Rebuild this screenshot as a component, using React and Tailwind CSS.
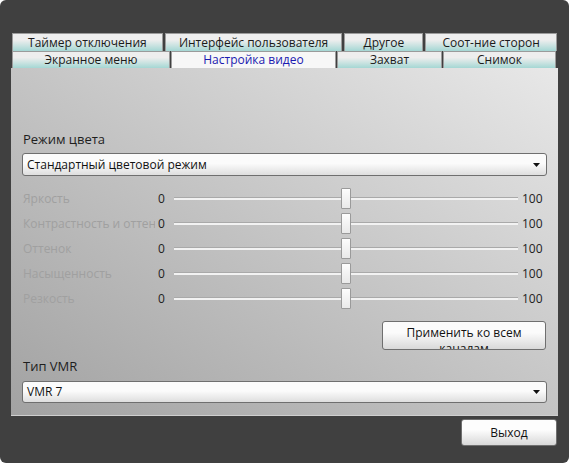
import React from 'react';

const row1 = [
  { label: 'Таймер отключения', w: 'w-[151px]' },
  { label: 'Интерфейс пользователя', w: 'w-[178px]' },
  { label: 'Другое', w: 'w-[79px]' },
  { label: 'Соот-ние сторон', w: 'w-[132px]' },
];

const row2 = [
  { label: 'Экранное меню', w: 'w-[158px]' },
  { label: 'Настройка видео', w: 'w-[165px]', active: true },
  { label: 'Захват', w: 'w-[105px]' },
  { label: 'Снимок', w: 'w-[113px]' },
];

const sliders = ['Яркость', 'Контрастность и оттенок', 'Оттенок', 'Насыщенность', 'Резкость'];

function Tab({ label, w, active }) {
  return (
    <div
      className={`${w} h-full flex items-center justify-center border-x border-t border-[#9b9b9b] leading-none ${
        active
          ? 'bg-[#f7f7f7] text-[#1a1ab0]'
          : 'bg-linear-to-b from-[#eeeeee] from-35% to-[#a4d7d4] text-[#1b1b1b]'
      }`}
    >
      {label}
    </div>
  );
}

function Select({ value, h }) {
  return (
    <div
      className={`${h} flex items-center justify-between rounded-[3px] border border-[#6f6f6f] bg-linear-to-b from-[#fbfbfb] from-45% to-[#dedede] pl-[4px] pr-[6px] text-[#111]`}
    >
      <span>{value}</span>
      <svg width="7" height="4" viewBox="0 0 7 4">
        <path d="M0 0h7L3.5 4z" fill="#111" />
      </svg>
    </div>
  );
}

function SliderRow({ label }) {
  return (
    <div className="h-[25px] flex items-center">
      <div className="w-[133px] pl-[1px] mr-[3px] overflow-hidden whitespace-nowrap text-[#a0a0a0]">{label}</div>
      <div className="w-[10px] text-[#222]">0</div>
      <div className="flex-1 ml-[6px] relative h-[21px] flex items-center">
        <div className="w-full h-[3px] border-t border-[#a9a9a9] bg-[#f2f2f2]" />
        <div className="absolute left-1/2 -translate-x-1/2 top-0 w-[10px] h-[21px] rounded-[1px] border border-[#9a9a9a] bg-linear-to-b from-[#fdfdfd] to-[#e9e9e9]" />
      </div>
      <div className="ml-[4px] w-[25px] text-[#222]">100</div>
    </div>
  );
}

export default function App() {
  return (
    <div className="w-[569px] h-[463px] bg-white" style={{ fontFamily: '"Open Sans", sans-serif' }}>
      <div className="w-full h-full rounded-[6px] bg-[#404040] pt-[33px] px-[12px] text-[12px] flex flex-col">
        <div className="h-[18px] flex gap-[2px]">
          {row1.map((t) => (
            <Tab key={t.label} {...t} />
          ))}
        </div>
        <div className="h-[17px] flex gap-[1px]">
          {row2.map((t) => (
            <Tab key={t.label} {...t} />
          ))}
        </div>

        <div className="h-[348px] -mx-[1px] bg-linear-to-bl from-[#e8e8e8] to-[#a2a2a2] border-b border-[#cfcfcf] px-[11px] pt-[62px] flex flex-col">
          <div className="h-[18px] text-[13px] leading-[18px] pl-[1px] text-[#1e1e1e]">Режим цвета</div>
          <div className="mt-[5px]">
            <Select value="Стандартный цветовой режим" h="h-[23px]" />
          </div>

          <div className="mt-[10px]">
            {sliders.map((s) => (
              <SliderRow key={s} label={s} />
            ))}
          </div>

          <div className="mt-[10px] self-end mr-[1px] w-[164px] h-[29px] overflow-hidden rounded-[3px] border border-[#6f6f6f] bg-linear-to-b from-[#fbfbfb] from-40% to-[#d9d9d9] text-center leading-[16px] pt-[3px] text-[#111]">
            Применить ко всем
            <br />
            каналам
          </div>

          <div className="mt-[7px] h-[18px] text-[13px] leading-[18px] pl-[1px] text-[#1e1e1e]">Тип VMR</div>
          <div className="mt-[6px]">
            <Select value="VMR 7" h="h-[22px]" />
          </div>
        </div>

        <div className="mt-[3px] flex justify-end">
          <div className="w-[96px] h-[27px] flex items-center justify-center rounded-[3px] border border-[#6f6f6f] bg-linear-to-b from-[#fdfdfd] from-40% to-[#d8d8d8] text-[#111]">
            Выход
          </div>
        </div>
      </div>
    </div>
  );
}
